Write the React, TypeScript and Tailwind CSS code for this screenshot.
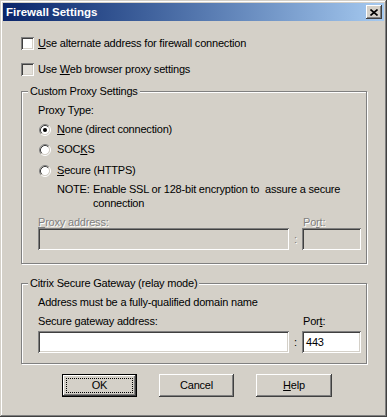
import React from "react";

const raised =
  "shadow-[inset_-1px_-1px_#404040,inset_1px_1px_#ffffff,inset_-2px_-2px_#808080,inset_2px_2px_#d4d0c8]";
const sunken =
  "shadow-[inset_1px_1px_#808080,inset_-1px_-1px_#ffffff,inset_2px_2px_#404040,inset_-2px_-2px_#d4d0c8]";
const disabledText = "text-[#808080] [text-shadow:1px_1px_0_#ffffff]";

function Radio({ checked }: { checked?: boolean }) {
  return (
    <svg width="12" height="12" viewBox="0 0 12 12" className="shrink-0">
      <circle cx="6" cy="6" r="4.2" fill="#ffffff" />
      <path d="M2.11 9.89 A5.5 5.5 0 0 1 9.89 2.11" stroke="#808080" fill="none" strokeWidth="1" />
      <path d="M9.89 2.11 A5.5 5.5 0 0 1 2.11 9.89" stroke="#ffffff" fill="none" strokeWidth="1" />
      <path d="M2.82 9.18 A4.5 4.5 0 0 1 9.18 2.82" stroke="#404040" fill="none" strokeWidth="1" />
      <path d="M9.18 2.82 A4.5 4.5 0 0 1 2.82 9.18" stroke="#d4d0c8" fill="none" strokeWidth="1" />
      {checked && <circle cx="6" cy="6" r="2" fill="#000000" />}
    </svg>
  );
}

function Checkbox({ grey }: { grey?: boolean }) {
  return (
    <span
      className={`block w-[13px] h-[13px] shrink-0 ${sunken} ${grey ? "bg-[#e2dfd9]" : "bg-white"}`}
    />
  );
}

function Group({ title, children, className }: { title: string; children: React.ReactNode; className?: string }) {
  return (
    <div
      className={`relative w-[346px] border border-[#808080] shadow-[1px_1px_0_#ffffff,inset_1px_1px_0_#ffffff] ${className ?? ""}`}
    >
      <span className="absolute left-[6px] -top-[7px] px-[2px] h-[13px] leading-[13px] bg-[#d4d0c8] whitespace-nowrap">
        {title}
      </span>
      {children}
    </div>
  );
}

function RadioRow({ checked, children, className }: { checked?: boolean; children: React.ReactNode; className?: string }) {
  return (
    <div className={`flex items-center h-[13px] pl-[1px] ${className ?? ""}`}>
      <Radio checked={checked} />
      <span className="ml-[6px] leading-[13px] whitespace-nowrap">{children}</span>
    </div>
  );
}

export default function App() {
  return (
    <div className="w-[387px] h-[417px] bg-[#d4d0c8] font-['Liberation_Sans',Arial,sans-serif] text-[11px] tracking-[-0.2px] text-black overflow-hidden">
      <div
        className={`w-[387px] h-[417px] p-[3px] flex flex-col shadow-[inset_-1px_-1px_#404040,inset_1px_1px_#d4d0c8,inset_-2px_-2px_#808080,inset_2px_2px_#ffffff]`}
      >
        {/* Title bar */}
        <div className="h-[18px] shrink-0 flex items-center justify-between bg-linear-to-r from-[#0a246a] to-[#a6caf0] pl-[3px] pr-[2px]">
          <span className="text-white font-bold text-[11.5px] tracking-normal leading-[18px]">Firewall Settings</span>
          <div className={`w-[16px] h-[14px] bg-[#d4d0c8] flex items-center justify-center ${raised}`}>
            <svg width="8" height="7" viewBox="0 0 8 7">
              <path d="M0.5 0.5 L7.5 6.5 M7.5 0.5 L0.5 6.5" stroke="#000" strokeWidth="1.6" />
            </svg>
          </div>
        </div>

        {/* Body */}
        <div className="flex flex-col pl-[18px]">
          <div className="flex items-center h-[13px] mt-[16px]">
            <Checkbox />
            <span className="ml-[4px] leading-[13px]">
              <u>U</u>se alternate address for firewall connection
            </span>
          </div>
          <div className="flex items-center h-[13px] mt-[13px]">
            <Checkbox grey />
            <span className="ml-[4px] leading-[13px]">
              Use <u>W</u>eb browser proxy settings
            </span>
          </div>

          <Group title="Custom Proxy Settings" className="mt-[15px] pt-[12px] pb-[13px] pl-[16px]">
            <div className="h-[13px] leading-[13px]">Proxy Type:</div>
            <RadioRow checked className="mt-[6px]">
              <u>N</u>one (direct connection)
            </RadioRow>
            <RadioRow className="mt-[7px]">
              SOC<u>K</u>S
            </RadioRow>
            <RadioRow className="mt-[8px]">
              <u>S</u>ecure (HTTPS)
            </RadioRow>
            <div className="flex mt-[5px] pl-[19px] leading-[14px]">
              <span className="w-[36px] shrink-0">NOTE:</span>
              <span className="w-[258px]">Enable SSL or 128-bit encryption to{"\u00a0"} assure a secure connection</span>
            </div>
            <div className="flex h-[12px] leading-[12px] mt-[6px]">
              <span className={`w-[264px] ${disabledText}`}>
                <u>P</u>roxy address:
              </span>
              <span className={`pl-[1px] ${disabledText}`}>
                Po<u>r</u>t:
              </span>
            </div>
            <div className="flex items-center">
              <div className={`w-[251px] h-[22px] bg-[#d4d0c8] ${sunken}`} />
              <span className={`w-[13px] text-center ${disabledText}`}>:</span>
              <div className={`w-[59px] h-[22px] bg-[#d4d0c8] ${sunken}`} />
            </div>
          </Group>

          <Group title="Citrix Secure Gateway (relay mode)" className="mt-[19px] pt-[12px] pb-[10px] pl-[16px]">
            <div className="h-[13px] leading-[13px]">Address must be a fully-qualified domain name</div>
            <div className="flex h-[13px] leading-[13px] mt-[6px]">
              <span className="w-[264px]">
                Secure <u>g</u>ateway address:
              </span>
              <span className="pl-[1px]">
                Por<u>t</u>:
              </span>
            </div>
            <div className="flex items-center mt-[3px]">
              <div className={`w-[251px] h-[22px] bg-white ${sunken}`} />
              <span className="w-[13px] text-center">:</span>
              <div className={`w-[59px] h-[22px] bg-white ${sunken} flex items-center pl-[4px] pt-[1px]`}>443</div>
            </div>
          </Group>

          <div className="flex mt-[10px] ml-[41px] gap-[22px]">
            <div className="w-[75px] h-[23px] border border-black bg-[#d4d0c8] flex">
              <div className={`flex-1 p-[3px] flex ${raised}`}>
                <div className="flex-1 border border-dotted border-black flex items-center justify-center leading-[13px]">
                  OK
                </div>
              </div>
            </div>
            <div className={`w-[75px] h-[23px] bg-[#d4d0c8] flex items-center justify-center ${raised}`}>
              Cancel
            </div>
            <div className={`w-[76px] h-[23px] bg-[#d4d0c8] flex items-center justify-center ${raised}`}>
              <span>
                <u>H</u>elp
              </span>
            </div>
          </div>
        </div>
      </div>
    </div>
  );
}
